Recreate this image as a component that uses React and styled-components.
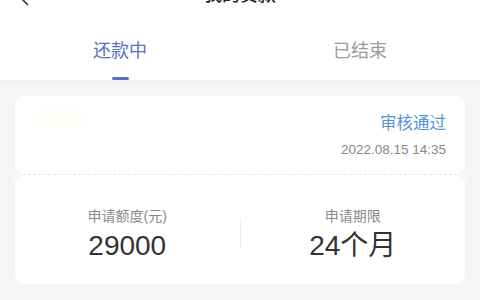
import styled, { createGlobalStyle } from "styled-components";

const GlobalStyle = createGlobalStyle`
  * { box-sizing: border-box; }
  body {
    margin: 0;
    background: #f5f5f5;
    font-family: "Liberation Sans", "Noto Sans CJK SC", sans-serif;
    overflow: hidden;
  }
`;

const Page = styled.div`
  width: 480px;
  height: 300px;
  overflow: hidden;
`;

const Top = styled.div`
  background: #fff;
  box-shadow: 0 2px 6px rgba(0, 0, 0, 0.04);
`;

const NavBar = styled.div`
  position: relative;
  height: 30px;
  margin-top: -20px;
  display: flex;
  align-items: center;
  justify-content: center;
`;

const Back = styled.svg`
  position: absolute;
  left: 20px;
  top: 12px;
`;

const Title = styled.div`
  font-size: 18px;
  line-height: 24px;
  color: #222;
  font-weight: 500;
`;

const Tabs = styled.div`
  display: flex;
  height: 70px;
`;

const Tab = styled.div`
  flex: 1;
  display: flex;
  flex-direction: column;
  align-items: center;
  padding-top: 30px;
`;

const TabLabel = styled.span`
  font-size: 18px;
  line-height: 22px;
  color: ${(p) => (p.$active ? "#5a72c0" : "#9a9a9a")};
`;

const Indicator = styled.span`
  margin-top: 15px;
  width: 17px;
  height: 3px;
  border-radius: 2px;
  background: ${(p) => (p.$active ? "#5470c6" : "transparent")};
`;

const List = styled.div`
  padding: 16px 15px;
`;

const Card = styled.div`
  background: #fff;
  border-radius: 8px;
`;

const CardHead = styled.div`
  display: flex;
  justify-content: space-between;
  padding: 12px 19px 15px 16px;
`;

const Blur = styled.div`
  width: 54px;
  height: 22px;
  border-radius: 6px;
  background: #fefdf8;
  filter: blur(4px);
`;

const Meta = styled.div`
  display: flex;
  flex-direction: column;
  align-items: flex-end;
  padding-top: 4px;
`;

const Status = styled.span`
  font-size: 16.5px;
  line-height: 22px;
  color: #5591d6;
`;

const Time = styled.span`
  margin-top: 7px;
  font-size: 13.5px;
  line-height: 18px;
  color: #888;
`;

const Cut = styled.div`
  position: relative;
  margin: 0 8px;
  border-top: 1px dashed #e6e6e6;

  &::before,
  &::after {
    content: "";
    position: absolute;
    top: -6px;
    width: 12px;
    height: 12px;
    border-radius: 50%;
    background: #f7f7f7;
  }
  &::before { left: -14px; }
  &::after { right: -14px; }
`;

const Stats = styled.div`
  display: grid;
  grid-template-columns: 1fr 1px 1fr;
  align-items: center;
  padding: 31px 0 23px;
`;

const Stat = styled.div`
  display: flex;
  flex-direction: column;
  align-items: center;
`;

const StatLabel = styled.span`
  font-size: 14px;
  line-height: 20px;
  color: #8a8a8a;
`;

const StatValue = styled.span`
  margin-top: 5px;
  font-size: 28px;
  line-height: 30px;
  color: #333;
`;

const VLine = styled.div`
  height: 31px;
  background: #ededed;
`;

export default function App() {
  return (
    <Page>
      <GlobalStyle />
      <Top>
        <NavBar>
          <Back width="10" height="14" viewBox="0 0 10 14" fill="none">
            <path d="M8 1L2 7l6 6" stroke="#333" strokeWidth="1.6" />
          </Back>
          <Title>我的贷款</Title>
        </NavBar>
        <Tabs>
          <Tab>
            <TabLabel $active>还款中</TabLabel>
            <Indicator $active />
          </Tab>
          <Tab>
            <TabLabel>已结束</TabLabel>
            <Indicator />
          </Tab>
        </Tabs>
      </Top>
      <List>
        <Card>
          <CardHead>
            <Blur />
            <Meta>
              <Status>审核通过</Status>
              <Time>2022.08.15 14:35</Time>
            </Meta>
          </CardHead>
          <Cut />
          <Stats>
            <Stat>
              <StatLabel>申请额度(元)</StatLabel>
              <StatValue>29000</StatValue>
            </Stat>
            <VLine />
            <Stat>
              <StatLabel>申请期限</StatLabel>
              <StatValue>24个月</StatValue>
            </Stat>
          </Stats>
        </Card>
      </List>
    </Page>
  );
}
